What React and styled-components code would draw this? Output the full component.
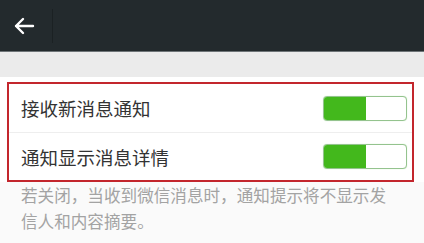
import React from 'react'
import styled, { createGlobalStyle } from 'styled-components'

const Global = createGlobalStyle`
  html, body { margin: 0; padding: 0; background: #fafafa; }
  body { font-family: "Noto Sans CJK SC", "Noto Sans", sans-serif; }
`

const Page = styled.div`
  width: 424px;
  height: 243px;
  overflow: hidden;
  background: #fafafa;
`

const Header = styled.div`
  height: 51px;
  background: #232a2d;
  border-bottom: 1px solid #6e7477;
  display: flex;
  align-items: center;
`

const Back = styled.div`
  width: 53px;
  height: 34px;
  display: flex;
  align-items: center;
  justify-content: center;
  border-right: 1px solid #1b2123;
  box-sizing: border-box;
  padding-right: 4px;
`

const Band = styled.div`
  height: 25px;
  background: #ebebeb;
`

const Section = styled.div`
  background: #fff;
  padding: 5px 10px 0 7px;
`

const Highlight = styled.div`
  border: 2px solid #c3262d;
`

const Row = styled.div`
  height: ${p => p.h}px;
  display: flex;
  align-items: center;
  justify-content: space-between;
  padding: 0 5px 0 12px;
  border-bottom: ${p => (p.last ? 'none' : '1px solid #eeeeee')};
  font-size: 18.5px;
  color: #333;
`

const Switch = styled.div`
  width: 84px;
  height: 25px;
  box-sizing: border-box;
  border: 1px solid #94c38e;
  border-radius: 4px;
  overflow: hidden;
  display: flex;
  background: #fff;
  box-shadow: 0 0 1px #b9e3b0;
`

const Knob = styled.div`
  width: 42px;
  background: #43b81c;
`

const Note = styled.div`
  padding: 0 30px 0 21px;
  font-size: 16.6px;
  line-height: 26px;
  color: #a3a3a3;
`

export default function App() {
  return (
    <Page>
      <Global />
      <Header>
        <Back>
          <svg width="22" height="18" viewBox="0 0 22 18" fill="none">
            <path d="M20 9H3M10 2L3 9l7 7" stroke="#fff" strokeWidth="2.4" strokeLinecap="round" strokeLinejoin="round" />
          </svg>
        </Back>
      </Header>
      <Band />
      <Section>
        <Highlight>
          <Row h={48}>
            接收新消息通知
            <Switch><Knob /></Switch>
          </Row>
          <Row h={47} last>
            通知显示消息详情
            <Switch><Knob /></Switch>
          </Row>
        </Highlight>
      </Section>
      <Note>若关闭，当收到微信消息时，通知提示将不显示发信人和内容摘要。</Note>
    </Page>
  )
}
